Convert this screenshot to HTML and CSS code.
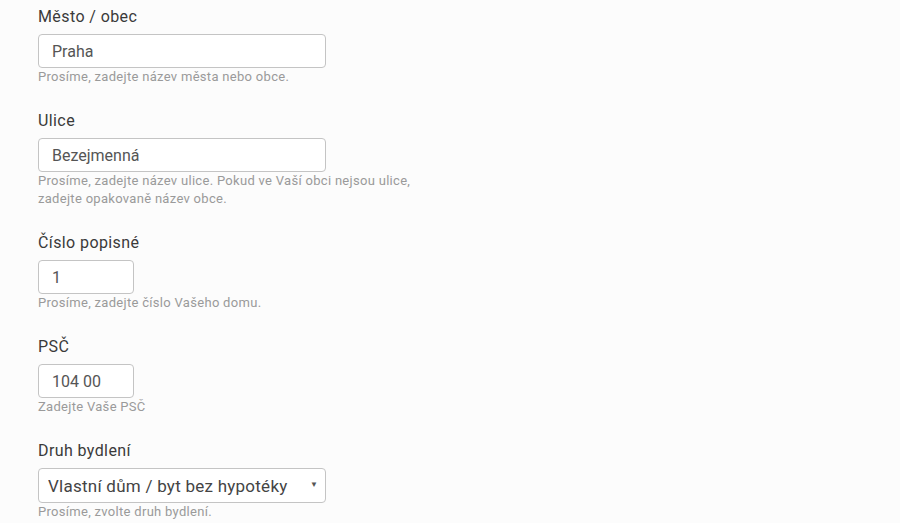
FILE: index.html
```html
<!DOCTYPE html>
<html lang="cs">
<head>
    <meta charset="UTF-8">
    <meta name="viewport" content="width=device-width, initial-scale=1.0">
    <title>Adresa</title>
    <link rel="stylesheet" href="styles.css">
</head>
<body>
    <form class="address-form">
        <div class="form-group">
            <label for="city">Město / obec</label>
            <input type="text" id="city" class="field field-wide" value="Praha">
            <span class="help-text">Prosíme, zadejte název města nebo obce.</span>
        </div>
        <div class="form-group">
            <label for="street">Ulice</label>
            <input type="text" id="street" class="field field-wide" value="Bezejmenná">
            <span class="help-text">Prosíme, zadejte název ulice. Pokud ve Vaší obci nejsou ulice,<br>zadejte opakovaně název obce.</span>
        </div>
        <div class="form-group">
            <label for="number">Číslo popisné</label>
            <input type="text" id="number" class="field field-short" value="1">
            <span class="help-text">Prosíme, zadejte číslo Vašeho domu.</span>
        </div>
        <div class="form-group">
            <label for="zip">PSČ</label>
            <input type="text" id="zip" class="field field-short" value="104 00">
            <span class="help-text">Zadejte Vaše PSČ</span>
        </div>
        <div class="form-group">
            <label for="housing">Druh bydlení</label>
            <div class="select-wrap">
                <select id="housing" class="field field-wide field-select">
                    <option>Vlastní dům / byt bez hypotéky</option>
                    <option>Vlastní dům / byt s hypotékou</option>
                    <option>Nájem</option>
                </select>
                <span class="select-arrow">▼</span>
            </div>
            <span class="help-text">Prosíme, zvolte druh bydlení.</span>
        </div>
    </form>
</body>
</html>
```

FILE: styles.css
```css
body {
    margin: 0;
    background-color: #fcfcfc;
    font-family: Roboto, "Noto Sans", sans-serif;
    color: #333;
}
.address-form {
    padding: 6px 38px 0;
}
.form-group {
    display: flex;
    flex-direction: column;
    align-items: flex-start;
    margin-bottom: 24px;
}
.form-group label {
    font-size: 16px;
    line-height: 22px;
    letter-spacing: 0.4px;
    margin-bottom: 6px;
    color: #3a3a3a;
}
.field {
    box-sizing: border-box;
    height: 34px;
    padding: 0 13px;
    border: 1px solid #c4c4c4;
    border-radius: 4px;
    background-color: #fff;
    font-family: inherit;
    font-size: 16px;
    color: #555;
    outline: none;
}
.field-wide {
    width: 288px;
}
.field-short {
    width: 96px;
}
.select-wrap {
    position: relative;
}
.field-select {
    appearance: none;
    -webkit-appearance: none;
    height: 35px;
    padding: 0 24px 0 9px;
    font-size: 17px;
    letter-spacing: 0.25px;
    color: #444;
}
.select-arrow {
    position: absolute;
    right: 8px;
    top: 12px;
    font-size: 8px;
    color: #555;
    pointer-events: none;
}
.help-text {
    display: block;
    font-size: 13px;
    line-height: 18px;
    letter-spacing: 0.3px;
    color: #9a9a9a;
}
```
